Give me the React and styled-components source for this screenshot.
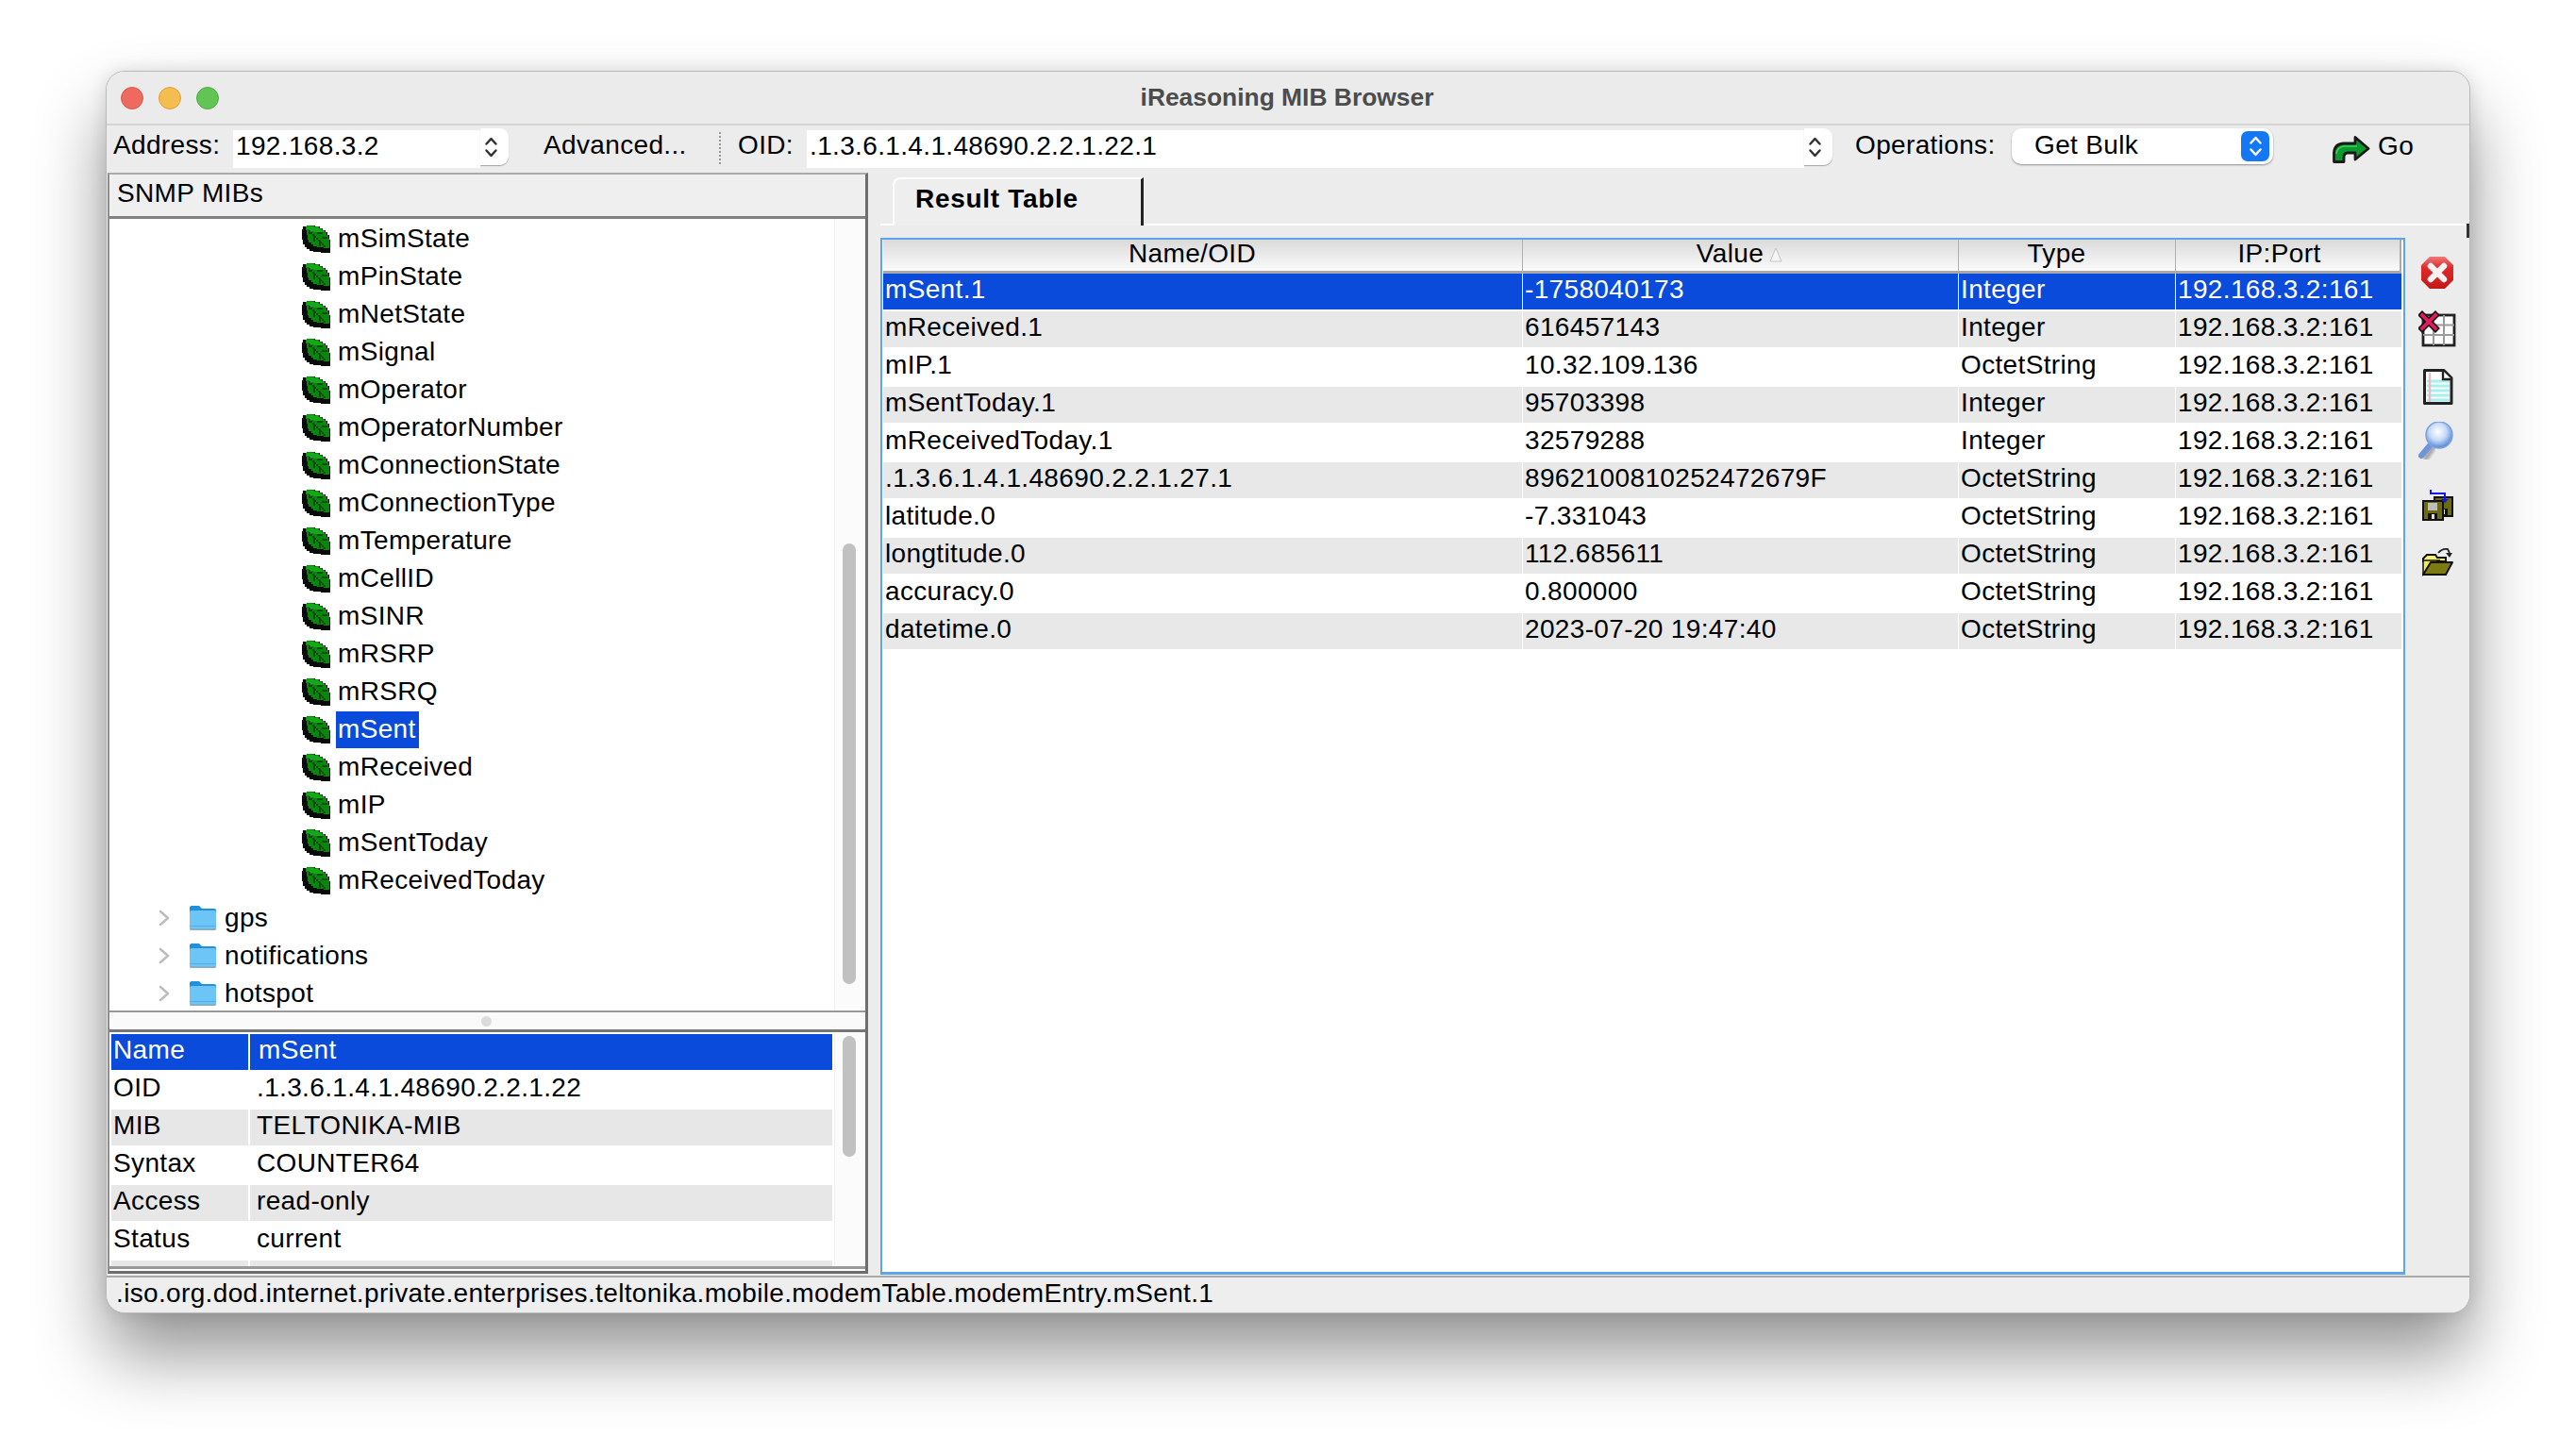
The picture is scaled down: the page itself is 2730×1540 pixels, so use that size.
import React from "react";
import styled, { createGlobalStyle } from "styled-components";

const FONT = `"Liberation Sans", Arial, Helvetica, sans-serif`;
const BLUE = "#0a4bdb";

const Global = createGlobalStyle`
  html, body { margin: 0; padding: 0; background: #fff; }
  body { width: 2730px; height: 1540px; overflow: hidden; font-family: ${FONT}; color: #000; }
  * { box-sizing: border-box; }
`;

const Stage = styled.div`
  width: 2730px;
  height: 1540px;
  padding: 75px 112px 148px;
`;

const Window = styled.div`
  width: 2506px;
  height: 1317px;
  border: 1px solid #b9b9b9;
  border-radius: 20px;
  background: #ececec;
  overflow: hidden;
  display: flex;
  flex-direction: column;
  box-shadow: 0 44px 74px rgba(0, 0, 0, 0.42), 0 0 18px rgba(0, 0, 0, 0.12);
  font-size: 28px;
  letter-spacing: 0.35px;
`;

/* Title bar */
const TitleBar = styled.div`
  height: 57px;
  flex: none;
  display: grid;
  grid-template-columns: 1fr auto 1fr;
  align-items: center;
  padding: 0 15px;
  background: #ebebeb;
  border-bottom: 2px solid #d4d4d4;
`;
const Lights = styled.div`
  display: flex;
  gap: 16px;
`;
const Light = styled.span`
  width: 24px;
  height: 24px;
  border-radius: 50%;
  background: ${(p) => p.$bg};
  border: 1px solid ${(p) => p.$edge};
`;
const Title = styled.div`
  font-size: 26.4px;
  font-weight: 700;
  letter-spacing: 0;
  color: #4c4c4c;
  margin-right: 2px;
`;

/* Toolbar */
const Toolbar = styled.div`
  height: 50px;
  flex: none;
  display: flex;
  align-items: center;
  padding-left: 7px;
  background: #ececec;
`;
const Label = styled.span`
  flex: none;
  align-self: flex-start;
  width: ${(p) => p.$w}px;
  height: 40px;
  margin-top: 1px;
  line-height: 40px;
  white-space: nowrap;
`;
const Combo = styled.div`
  flex: none;
  display: flex;
  width: ${(p) => p.$w}px;
  height: 40px;
  align-self: flex-end;
  margin-bottom: 5px;
`;
const ComboField = styled.div`
  flex: 1;
  background: #fff;
  padding-left: ${(p) => p.$pad}px;
  line-height: 33px;
`;
const ComboTail = styled.div`
  flex: none;
  width: 30px;
  height: 39px;
  margin-top: -2px;
  padding-right: 7px;
  display: flex;
  align-items: center;
  justify-content: center;
  background: #fff;
  border-radius: 0 9px 9px 0;
  box-shadow: 0 1px 1px rgba(0, 0, 0, 0.3);
`;
const Dots = styled.span`
  flex: none;
  width: 20px;
  height: 34px;
  border-left: 2px dotted #999;
  margin-top: -2px;
`;
const Select = styled.div`
  flex: none;
  width: 277px;
  height: 38px;
  margin: -6px 0 0 0;
  padding: 0 4px 0 24px;
  display: flex;
  align-items: center;
  justify-content: space-between;
  background: #fff;
  border-radius: 10px;
  box-shadow: 0 1px 2px rgba(0, 0, 0, 0.4);
`;
const SelectText = styled.span`
  margin-top: -3px;
`;
const SelectStep = styled.span`
  width: 30px;
  height: 32px;
  border-radius: 7px;
  background: #1478f5;
  display: flex;
  align-items: center;
  justify-content: center;
`;
const GoButton = styled.div`
  flex: none;
  margin-left: 62px;
  display: flex;
  align-items: center;
  gap: 8px;
`;
const GoText = styled.span`
  margin-top: -7px;
`;

/* Main area */
const Main = styled.div`
  flex: 1;
  min-height: 0;
  display: flex;
  padding-left: 1px;
`;

const LeftPane = styled.div`
  flex: none;
  width: 806px;
  height: 1167px;
  display: flex;
  flex-direction: column;
  border-top: 2px solid #aaaaaa;
  border-left: 2px solid #8e8e8e;
  border-right: 3px solid #6e6e6e;
  border-bottom: 3px solid #6e6e6e;
`;
const PaneHeader = styled.div`
  height: 47px;
  flex: none;
  padding-left: 8px;
  line-height: 39px;
  background: #efefef;
  border-bottom: 3px solid #808080;
`;
const TreeArea = styled.div`
  height: 839px;
  flex: none;
  display: flex;
  background: #fff;
  overflow: hidden;
`;
const TreeList = styled.div`
  flex: 1;
  min-width: 0;
  padding-top: 1px;
`;
const TreeRow = styled.div`
  height: 40px;
  display: flex;
  align-items: center;
  padding-left: ${(p) => p.$indent}px;
`;
const NodeLabel = styled.span`
  height: 39px;
  line-height: 37px;
  padding: 0 3px 0 2px;
  margin-left: ${(p) => p.$gap}px;
  white-space: nowrap;
  background: ${(p) => (p.$on ? BLUE : "transparent")};
  color: ${(p) => (p.$on ? "#fff" : "#000")};
`;
const ChevronGap = styled.span`
  flex: none;
  width: 20px;
`;
const Track = styled.div`
  flex: none;
  width: 33px;
  padding: ${(p) => p.$pad} 0 0 8px;
  background: #fbfbfb;
  border-left: 1px solid #efefef;
  border-right: 1px solid #f3f3f3;
`;
const Thumb = styled.div`
  width: 14px;
  height: ${(p) => p.$h}px;
  border-radius: 7px;
  background: #c1c1c1;
`;
const Splitter = styled.div`
  height: 23px;
  flex: none;
  display: flex;
  align-items: center;
  justify-content: center;
  background: #fafafa;
  border-top: 2px solid #999;
  border-bottom: 3px solid #777;
  padding-right: 2px;
`;
const Grip = styled.span`
  width: 11px;
  height: 11px;
  border-radius: 50%;
  background: #dcdcdc;
`;
const PropArea = styled.div`
  height: 248px;
  flex: none;
  display: flex;
  background: #fff;
  overflow: hidden;
`;
const PropList = styled.div`
  flex: 1;
  min-width: 0;
  padding: 2px 2px 0 2px;
`;
const PropRow = styled.div`
  height: 40px;
  display: grid;
  grid-template-columns: 145px 1fr;
  column-gap: 2px;
`;
const PropCell = styled.div`
  height: 38px;
  line-height: 34px;
  padding-left: ${(p) => p.$pad}px;
  background: ${(p) => (p.$sel ? BLUE : p.$alt ? "#e7e7e7" : "#fff")};
  color: ${(p) => (p.$sel ? "#fff" : "#000")};
  white-space: nowrap;
`;
const PaneFoot = styled.div`
  height: 5px;
  flex: none;
  background: #fff;
  border-top: 3px solid #999;
`;

/* Right pane */
const RightPane = styled.div`
  flex: 1;
  min-width: 0;
  display: flex;
  flex-direction: column;
`;
const TabStrip = styled.div`
  position: relative;
  height: 56px;
  flex: none;
  margin-left: 13px;
  padding: 5px 0 0 13px;
  border-bottom: 2px solid #fff;
  &::after {
    content: "";
    position: absolute;
    right: 0;
    bottom: -15px;
    width: 3px;
    height: 15px;
    background: #333;
  }
`;
const Tab = styled.div`
  width: 266px;
  height: 51px;
  padding-left: 22px;
  line-height: 41px;
  font-weight: 700;
  letter-spacing: 0.7px;
  background: #eeeeee;
  border-top: 2px solid #fff;
  border-left: 2px solid #fff;
  border-right: 3px solid #222;
  border-top-left-radius: 8px;
`;
const Body = styled.div`
  flex: 1;
  min-height: 0;
  display: flex;
  padding: 13px 0 1px 13px;
`;
const TablePanel = styled.div`
  flex: none;
  width: 1616px;
  display: flex;
  flex-direction: column;
  background: #fff;
  border: 2px solid #5aa6e6;
  border-bottom-width: 3px;
  padding-right: 1px;
`;
const TableHead = styled.div`
  height: 36px;
  flex: none;
  display: grid;
  grid-template-columns: 678px 462px 230px 241px;
  border-bottom: 3px solid #a9a9a9;
  border-right: 2px solid #a9a9a9;
  background: linear-gradient(#dadada, #fbfbfb);
  margin: 0 1px 0 1px;
`;
const HeadCell = styled.div`
  position: relative;
  text-align: center;
  padding-right: 22px;
  line-height: 29px;
  border-right: 1px solid #b0b0b0;
  &:last-child {
    border-right: 0;
  }
`;
const SortMark = styled.svg`
  position: absolute;
  top: 8px;
  left: 261px;
`;
const Rows = styled.div`
  flex: 1;
  padding-left: 1px;
`;
const Row = styled.div`
  height: 40px;
  display: grid;
  grid-template-columns: 677px 461px 229px 239px;
  column-gap: 1px;
  width: 1609px;
`;
const Cell = styled.div`
  height: 38px;
  line-height: 34px;
  padding-left: 2px;
  white-space: nowrap;
  background: ${(p) => (p.$sel ? BLUE : p.$alt ? "#e8e8e8" : "#fff")};
  color: ${(p) => (p.$sel ? "#fff" : "#000")};
`;
const SideBar = styled.div`
  flex: 1;
  display: flex;
  flex-direction: column;
  align-items: center;
  padding-top: 17px;
`;
const ToolIcon = styled.svg`
  flex: none;
  width: 40px;
  height: 40px;
  margin-top: ${(p) => p.$mt}px;
`;

/* Status bar */
const StatusBar = styled.div`
  height: 39px;
  flex: none;
  padding-left: 10px;
  line-height: 33px;
  background: #eeeeee;
  border-top: 2px solid #aaaaaa;
`;

/* ---- drawings ---- */
const Updown = ({ stroke = "#333" }) => (
  <svg width="15" height="22" viewBox="0 0 15 22" fill="none" stroke={stroke} strokeWidth="2.500" strokeLinecap="round" strokeLinejoin="round">
    <path d="M2.500 7.500 7.500 2l5 5.500" />
    <path d="M2.500 14.500 7.500 20l5-5.500" />
  </svg>
);

const Leaf = () => (
  <svg width="32" height="32" viewBox="0 0 32 32" style={{ flex: "none" }} shapeRendering="crispEdges">
    <path d="M2 3h4V2h9v1h5v2h3v2h3v2h2v3h2v5h1v14H21v-1h-8v-1H9v-2H6v-2H4v-3H2v-5H1V6h1Z" fill="#0a0a0a" />
    <path d="M6 2h8v1h5v2h3v2h3v2h2v3h2v4h1v10h-6v-1h-7v-1h-4v-2h-2v-2H8v-3H7v-5H6V7H5V3h1Z" fill="#0a860e" />
    <path d="M6 3h8v1h5v2h3v2h3v1H14V8H9V6H6Z" fill="#12a818" />
    <path d="M8 7h2v2h2v2h2v2h2v2h2v2h2v2h2v2h2v2h2v2h-2v-2h-2v-2h-2v-2h-2v-2h-2v-2h-2v-2h-2v-2H8Z" fill="#054606" />
    <path d="M13 12h2v7h-2ZM19 17h2v7h-2ZM17 9h6v2h-6ZM22 14h6v2h-6Z" fill="#064f09" />
  </svg>
);

const Folder = () => (
  <svg width="30" height="28" viewBox="0 0 30 28" style={{ flex: "none" }}>
    <path d="M1 3a2 2 0 0 1 2-2h8l3 3h13a2 2 0 0 1 2 2v6H1Z" fill="#1f8fdf" />
    <rect x="1" y="6" width="28" height="21" rx="2" fill="#6cc4f7" />
    <rect x="1" y="22" width="28" height="1" fill="#4fafe8" />
    <rect x="1" y="25" width="28" height="2" rx="1" fill="#9a9a9a" opacity="0.5" />
  </svg>
);

const Chevron = () => (
  <svg width="12" height="18" viewBox="0 0 12 18" fill="none" stroke="#bdbdbd" strokeWidth="2.600" strokeLinecap="round" strokeLinejoin="round" style={{ flex: "none" }}>
    <path d="M2 2l8 7-8 7" />
  </svg>
);

const GoArrow = () => (
  <svg width="41" height="31" viewBox="0 0 41 31">
    <path d="M2.500 28.500V19Q3 9.500 13 9H25V2.500L39 14.500 25 26V19H17Q13 19 13 24V28.500Z" fill="#0b9a2e" stroke="#1a1a1a" strokeWidth="2.800" strokeLinejoin="round" />
    <path d="M5 20q1-7 8-8h14" stroke="#3fcf62" strokeWidth="1.500" fill="none" />
  </svg>
);

const StopIcon = () => (
  <ToolIcon $mt={0} viewBox="0 0 40 40">
    <defs>
      <linearGradient id="stopFill" x1="0" y1="0" x2="0" y2="1">
        <stop offset="0" stopColor="#ee7a7a" />
        <stop offset="0.35" stopColor="#dd2a2a" />
        <stop offset="1" stopColor="#c41818" />
      </linearGradient>
    </defs>
    <path d="M12 3h16l9 9v16l-9 9H12l-9-9V12Z" fill="url(#stopFill)" />
    <path d="M13 13l14 14M27 13L13 27" stroke="#fdf2f2" strokeWidth="6.500" strokeLinecap="round" />
  </ToolIcon>
);

const ClearTableIcon = () => (
  <ToolIcon $mt={19} viewBox="0 0 40 40">
    <rect x="5" y="6" width="33" height="32" fill="#fff" stroke="#222" strokeWidth="2.800" />
    <path d="M16 6v32M27 6v32M5 16.500h33M5 27h33" stroke="#9a9a9a" strokeWidth="2" />
    <path d="M4 6l14 14M18 6L4 20" stroke="#111" strokeWidth="7" strokeLinecap="square" />
    <path d="M4 6l14 14M18 6L4 20" stroke="#e5195f" strokeWidth="3.800" strokeLinecap="square" />
  </ToolIcon>
);

const DocIcon = () => (
  <ToolIcon $mt={22} viewBox="0 0 40 40">
    <path d="M6.500 2.500H27L35 10.500V37.500H6.500Z" fill="#fff" stroke="#222" strokeWidth="3" strokeLinejoin="round" />
    <path d="M9 14h24M9 19h24M9 24h24M9 29h24M9 34h24" stroke="#a6f0f0" strokeWidth="3" />
    <path d="M12 5v31" stroke="#f2b6c2" strokeWidth="2.400" />
    <path d="M26 3v9h9" fill="#fff" stroke="#222" strokeWidth="2.400" />
  </ToolIcon>
);

const MagnifierIcon = () => (
  <ToolIcon $mt={17} viewBox="0 0 40 40">
    <defs>
      <radialGradient id="lensFill" cx="45%" cy="38%" r="65%">
        <stop offset="0" stopColor="#ffffff" />
        <stop offset="0.5" stopColor="#c4daf8" />
        <stop offset="1" stopColor="#4a7bd0" />
      </radialGradient>
      <filter id="lensBlur" x="-30%" y="-30%" width="160%" height="160%">
        <feGaussianBlur stdDeviation="1.600" />
      </filter>
    </defs>
    <path d="M12 27 5 37" stroke="#555" strokeWidth="6" strokeLinecap="round" opacity="0.45" filter="url(#lensBlur)" transform="translate(3 1)" />
    <path d="M13 24 3 36" stroke="#6f94da" strokeWidth="6" strokeLinecap="round" />
    <circle cx="22" cy="14" r="14" fill="url(#lensFill)" stroke="#7da2e2" strokeWidth="1.500" />
  </ToolIcon>
);

const SaveIcon = () => (
  <ToolIcon $mt={26} viewBox="0 0 40 40">
    <rect x="17" y="14" width="19" height="20" fill="#6b6b12" stroke="#111" strokeWidth="2" />
    <rect x="22" y="26" width="9" height="8" fill="#111" />
    <rect x="25" y="27" width="3" height="5" fill="#ddd" />
    <rect x="5" y="18" width="21" height="20" fill="#6b6b12" stroke="#111" strokeWidth="2" />
    <rect x="10" y="20" width="10" height="8" fill="#bdbdbd" />
    <rect x="10" y="31" width="10" height="7" fill="#111" />
    <rect x="14" y="32" width="3" height="5" fill="#ddd" />
    <path d="M13 6v4h15v6" stroke="#1414ee" strokeWidth="2" fill="none" />
    <path d="M24 16h8l-4 4Z" fill="#1414ee" />
  </ToolIcon>
);

const OpenIcon = () => (
  <ToolIcon $mt={22} viewBox="0 0 40 40">
    <path d="M5 17l4-4h9l2 3h9v4H5Z" fill="#f6f070" stroke="#111" strokeWidth="2" />
    <path d="M5 34V19h18L14 23Z" fill="#f3ec55" stroke="#111" strokeWidth="1.500" />
    <path d="M5 34 13 21H36L29 34Z" fill="#7d7a10" stroke="#111" strokeWidth="2" strokeLinejoin="round" />
    <path d="M21 11q4-5 10-4l2 4" stroke="#222" strokeWidth="1.800" fill="none" />
    <path d="M29 11h7l-3 5Z" fill="#222" />
  </ToolIcon>
);

/* ---- data ---- */
const leaves = [
  "mSimState", "mPinState", "mNetState", "mSignal", "mOperator", "mOperatorNumber",
  "mConnectionState", "mConnectionType", "mTemperature", "mCellID", "mSINR", "mRSRP",
  "mRSRQ", "mSent", "mReceived", "mIP", "mSentToday", "mReceivedToday",
];
const folders = ["gps", "notifications", "hotspot"];
const props = [
  ["Name", "mSent"],
  ["OID", ".1.3.6.1.4.1.48690.2.2.1.22"],
  ["MIB", "TELTONIKA-MIB"],
  ["Syntax", "COUNTER64"],
  ["Access", "read-only"],
  ["Status", "current"],
  ["Description", ""],
];
const results = [
  ["mSent.1", "-1758040173", "Integer"],
  ["mReceived.1", "616457143", "Integer"],
  ["mIP.1", "10.32.109.136", "OctetString"],
  ["mSentToday.1", "95703398", "Integer"],
  ["mReceivedToday.1", "32579288", "Integer"],
  [".1.3.6.1.4.1.48690.2.2.1.27.1", "8962100810252472679F", "OctetString"],
  ["latitude.0", "-7.331043", "OctetString"],
  ["longtitude.0", "112.685611", "OctetString"],
  ["accuracy.0", "0.800000", "OctetString"],
  ["datetime.0", "2023-07-20 19:47:40", "OctetString"],
];

export default function App() {
  return (
    <Stage>
      <Global />
      <Window>
        <TitleBar>
          <Lights>
            <Light $bg="#ee6a5f" $edge="#d9584e" />
            <Light $bg="#f5bd4f" $edge="#dca23a" />
            <Light $bg="#61c454" $edge="#52ad46" />
          </Lights>
          <Title>iReasoning MIB Browser</Title>
          <span />
        </TitleBar>

        <Toolbar>
          <Label $w={127}>Address:</Label>
          <Combo $w={292}>
            <ComboField $pad={3}>192.168.3.2</ComboField>
            <ComboTail><Updown /></ComboTail>
          </Combo>
          <Label $w={37} />
          <Label $w={186}>Advanced...</Label>
          <Dots />
          <Label $w={73}>OID:</Label>
          <Combo $w={1087}>
            <ComboField $pad={3}>.1.3.6.1.4.1.48690.2.2.1.22.1</ComboField>
            <ComboTail><Updown /></ComboTail>
          </Combo>
          <Label $w={24} />
          <Label $w={166}>Operations:</Label>
          <Select>
            <SelectText>Get Bulk</SelectText>
            <SelectStep><Updown stroke="#fff" /></SelectStep>
          </Select>
          <GoButton>
            <GoArrow />
            <GoText>Go</GoText>
          </GoButton>
        </Toolbar>

        <Main>
          <LeftPane>
            <PaneHeader>SNMP MIBs</PaneHeader>
            <TreeArea>
              <TreeList>
                {leaves.map((name) => (
                  <TreeRow key={name} $indent={203}>
                    <Leaf />
                    <NodeLabel $gap={5} $on={name === "mSent"}>{name}</NodeLabel>
                  </TreeRow>
                ))}
                {folders.map((name) => (
                  <TreeRow key={name} $indent={52}>
                    <Chevron />
                    <ChevronGap />
                    <Folder />
                    <NodeLabel $gap={6}>{name}</NodeLabel>
                  </TreeRow>
                ))}
              </TreeList>
              <Track $pad="344px"><Thumb $h={467} /></Track>
            </TreeArea>
            <Splitter><Grip /></Splitter>
            <PropArea>
              <PropList>
                {props.map(([k, v], i) => (
                  <PropRow key={k}>
                    <PropCell $pad={2} $sel={i === 0} $alt={i > 0 && i % 2 === 0}>{k}</PropCell>
                    <PropCell $pad={i === 0 ? 9 : 7} $sel={i === 0} $alt={i > 0 && i % 2 === 0}>{v}</PropCell>
                  </PropRow>
                ))}
              </PropList>
              <Track $pad="4px"><Thumb $h={128} /></Track>
            </PropArea>
            <PaneFoot />
          </LeftPane>

          <RightPane>
            <TabStrip>
              <Tab>Result Table</Tab>
            </TabStrip>
            <Body>
              <TablePanel>
                <TableHead>
                  <HeadCell>Name/OID</HeadCell>
                  <HeadCell>
                    Value
                    <SortMark width="14" height="16" viewBox="0 0 14 16">
                      <path d="M7 1 13 15H1Z" fill="#f6f6f6" stroke="#c4c4c4" strokeWidth="1" />
                    </SortMark>
                  </HeadCell>
                  <HeadCell>Type</HeadCell>
                  <HeadCell>IP:Port</HeadCell>
                </TableHead>
                <Rows>
                  {results.map((r, i) => (
                    <Row key={r[0]}>
                      {[...r, "192.168.3.2:161"].map((t, j) => (
                        <Cell key={j} $sel={i === 0} $alt={i % 2 === 1}>{t}</Cell>
                      ))}
                    </Row>
                  ))}
                </Rows>
              </TablePanel>
              <SideBar>
                <StopIcon />
                <ClearTableIcon />
                <DocIcon />
                <MagnifierIcon />
                <SaveIcon />
                <OpenIcon />
              </SideBar>
            </Body>
          </RightPane>
        </Main>

        <StatusBar>.iso.org.dod.internet.private.enterprises.teltonika.mobile.modemTable.modemEntry.mSent.1</StatusBar>
      </Window>
    </Stage>
  );
}
